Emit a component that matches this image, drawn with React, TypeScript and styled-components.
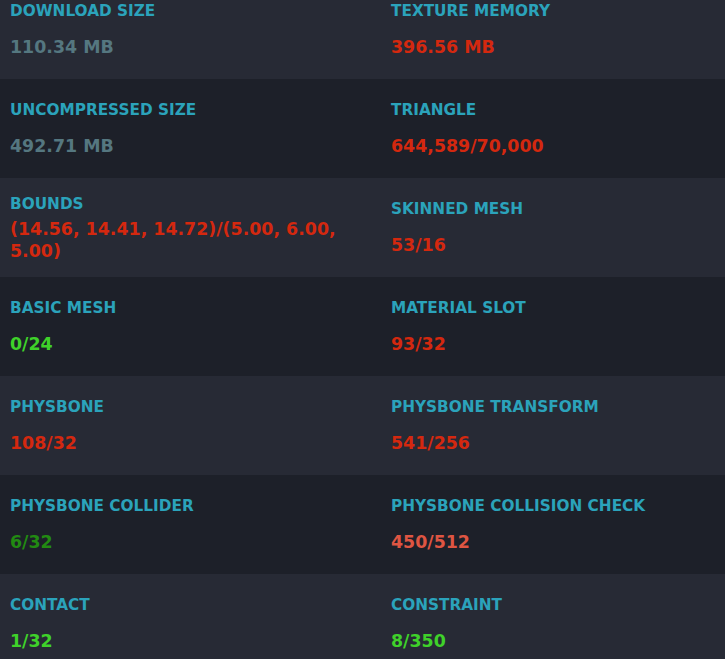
import React, { useEffect, useRef } from 'react';
import styled, { createGlobalStyle } from 'styled-components';

const GlobalStyle = createGlobalStyle`
    html, body {
        margin: 0;
        padding: 0;
        background: #1d2029;
    }
    body {
        font-family: 'DejaVu Sans', 'Noto Sans', sans-serif;
    }
`;

type Tone = 'muted' | 'bad' | 'warn' | 'good' | 'ok';

const TONES: Record<Tone, string> = {
    muted: '#557780',
    bad: '#d4280f',
    warn: '#df5542',
    good: '#3fd12a',
    ok: '#228a12',
};

const Panel = styled.div`
    height: 659px;
    overflow-y: auto;
    scrollbar-width: none;

    &::-webkit-scrollbar {
        display: none;
    }
`;

const Row = styled.div<{ $shade: boolean }>`
    display: grid;
    grid-template-columns: 381px 1fr;
    height: 99px;
    background: ${props => (props.$shade ? '#272a35' : '#1d2029')};
`;

const Cell = styled.div<{ $tight: boolean }>`
    display: flex;
    flex-direction: column;
    justify-content: center;
    gap: ${props => (props.$tight ? '4px' : '15px')};
    padding: 0 20px 0 10px;
`;

const Label = styled.div`
    color: #2ba3bb;
    font-size: 15.3px;
    font-weight: 700;
    line-height: 20px;
`;

const Value = styled.div<{ $tone: Tone }>`
    color: ${props => TONES[props.$tone]};
    font-size: 17.4px;
    font-weight: 700;
    line-height: 22px;
`;

type Stat = { label: string; value: string; tone: Tone };

const rows: Stat[][] = [
    [
        { label: 'DOWNLOAD SIZE', value: '110.34 MB', tone: 'muted' },
        { label: 'TEXTURE MEMORY', value: '396.56 MB', tone: 'bad' },
    ],
    [
        { label: 'UNCOMPRESSED SIZE', value: '492.71 MB', tone: 'muted' },
        { label: 'TRIANGLE', value: '644,589/70,000', tone: 'bad' },
    ],
    [
        { label: 'BOUNDS', value: '(14.56, 14.41, 14.72)/(5.00, 6.00, 5.00)', tone: 'bad' },
        { label: 'SKINNED MESH', value: '53/16', tone: 'bad' },
    ],
    [
        { label: 'BASIC MESH', value: '0/24', tone: 'good' },
        { label: 'MATERIAL SLOT', value: '93/32', tone: 'bad' },
    ],
    [
        { label: 'PHYSBONE', value: '108/32', tone: 'bad' },
        { label: 'PHYSBONE TRANSFORM', value: '541/256', tone: 'bad' },
    ],
    [
        { label: 'PHYSBONE COLLIDER', value: '6/32', tone: 'ok' },
        { label: 'PHYSBONE COLLISION CHECK', value: '450/512', tone: 'warn' },
    ],
    [
        { label: 'CONTACT', value: '1/32', tone: 'good' },
        { label: 'CONSTRAINT', value: '8/350', tone: 'good' },
    ],
];

const App = () => {
    const panelRef = useRef<HTMLDivElement>(null);

    // the view is shown scrolled down a little
    useEffect(() => {
        if (panelRef.current) panelRef.current.scrollTop = 20;
    }, []);

    return (
        <>
            <GlobalStyle />
            <Panel ref={panelRef}>
                {rows.map((row, i) => (
                    <Row key={i} $shade={i % 2 === 0}>
                        {row.map(stat => (
                            <Cell key={stat.label} $tight={stat.value.length > 30}>
                                <Label>{stat.label}</Label>
                                <Value $tone={stat.tone}>{stat.value}</Value>
                            </Cell>
                        ))}
                    </Row>
                ))}
            </Panel>
        </>
    );
};

export default App;
